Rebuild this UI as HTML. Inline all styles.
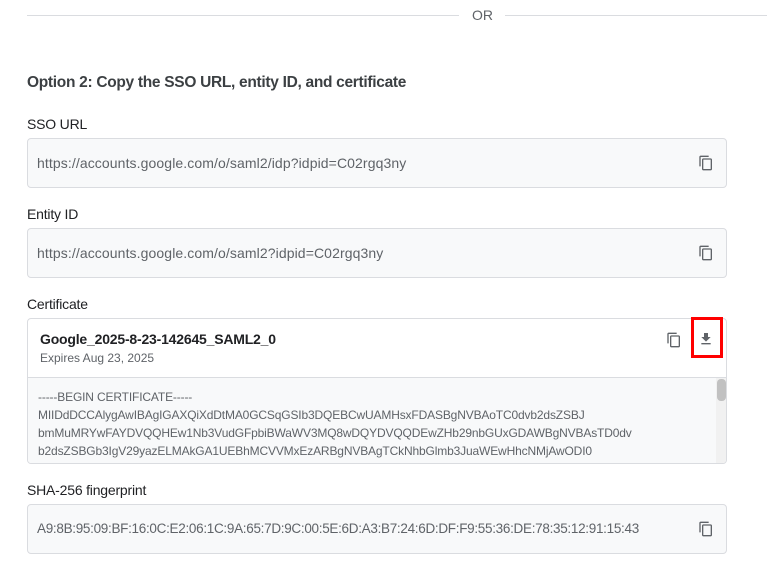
<!DOCTYPE html>
<html><head><meta charset="utf-8"><style>
*{box-sizing:border-box;margin:0;padding:0}
body{width:767px;height:576px;background:#fff;font-family:"Liberation Sans",Arial,sans-serif;position:relative;overflow:hidden;color:#202124}
.a{position:absolute}
.line{height:1px;background:#dadce0}
.lbl{font-size:14px;color:#202124;letter-spacing:-0.2px}
.box{position:absolute;left:27px;width:700px;border:1px solid #dadce0;border-radius:4px;background:#f8f9fa}
.val{position:absolute;left:9px;font-size:14px;color:#5f6368;letter-spacing:0.1px}
.cp{position:absolute;width:16px;height:18px}
</style></head><body>
<div class="a line" style="left:27px;top:15px;width:432px"></div>
<div class="a line" style="left:505px;top:15px;width:262px"></div>
<div class="a" style="left:472px;top:7px;font-size:14px;color:#5f6368">OR</div>
<div class="a" style="left:27px;top:74px;font-size:15.5px;font-weight:bold;color:#3c4043;letter-spacing:-0.3px">Option 2: Copy the SSO URL, entity ID, and certificate</div>

<div class="a lbl" style="left:27px;top:116px">SSO URL</div>
<div class="box" style="top:138px;height:50px"><div class="val" style="top:16px">https://accounts.google.com/o/saml2/idp?idpid=C02rgq3ny</div>
<svg class="cp" style="left:670px;top:15px" viewBox="0 0 24 24"><path fill="#5f6368" d="M16 1H4c-1.1 0-2 .9-2 2v14h2V3h12V1zm3 4H8c-1.1 0-2 .9-2 2v14c0 1.1.9 2 2 2h11c1.1 0 2-.9 2-2V7c0-1.1-.9-2-2-2zm0 16H8V7h11v14z"/></svg></div>

<div class="a lbl" style="left:27px;top:206px">Entity ID</div>
<div class="box" style="top:228px;height:50px"><div class="val" style="top:16px">https://accounts.google.com/o/saml2?idpid=C02rgq3ny</div>
<svg class="cp" style="left:670px;top:15px" viewBox="0 0 24 24"><path fill="#5f6368" d="M16 1H4c-1.1 0-2 .9-2 2v14h2V3h12V1zm3 4H8c-1.1 0-2 .9-2 2v14c0 1.1.9 2 2 2h11c1.1 0 2-.9 2-2V7c0-1.1-.9-2-2-2zm0 16H8V7h11v14z"/></svg></div>

<div class="a lbl" style="left:27px;top:296px">Certificate</div>
<div class="box" style="top:318px;height:146px;background:#fff;overflow:hidden">
<div class="a" style="left:12px;top:12px;font-size:14px;font-weight:bold;color:#202124;letter-spacing:-0.2px">Google_2025-8-23-142645_SAML2_0</div>
<div class="a" style="left:12px;top:32px;font-size:12px;color:#5f6368">Expires Aug 23, 2025</div>
<svg class="cp" style="left:638px;top:12px" viewBox="0 0 24 24"><path fill="#5f6368" d="M16 1H4c-1.1 0-2 .9-2 2v14h2V3h12V1zm3 4H8c-1.1 0-2 .9-2 2v14c0 1.1.9 2 2 2h11c1.1 0 2-.9 2-2V7c0-1.1-.9-2-2-2zm0 16H8V7h11v14z"/></svg>
<svg class="a" style="left:670px;top:12px;width:16px;height:16px" viewBox="0 0 24 24"><path fill="#5f6368" d="M19 9h-4V3H9v6H5l7 7 7-7zM5 18v2h14v-2H5z"/></svg>
<div class="a" style="left:0;top:58px;width:700px;height:88px;background:#f8f9fa;border-top:1px solid #dadce0"></div>
<div class="a" style="left:10px;top:69px;font-size:12px;line-height:18px;color:#5f6368;letter-spacing:-0.15px;white-space:nowrap">-----BEGIN CERTIFICATE-----<br>MIIDdDCCAlygAwIBAgIGAXQiXdDtMA0GCSqGSIb3DQEBCwUAMHsxFDASBgNVBAoTC0dvb2dsZSBJ<br>bmMuMRYwFAYDVQQHEw1Nb3VudGFpbiBWaWV3MQ8wDQYDVQQDEwZHb29nbGUxGDAWBgNVBAsTD0dv<br>b2dsZSBGb3IgV29yazELMAkGA1UEBhMCVVMxEzARBgNVBAgTCkNhbGlmb3JuaWEwHhcNMjAwODI0</div>
<div class="a" style="left:688px;top:59px;width:11px;height:87px;background:#f1f1f1"></div>
<div class="a" style="left:689px;top:60px;width:9px;height:22px;background:#c1c1c1;border-radius:4px"></div>
</div>
<div class="a" style="left:691px;top:317px;width:32px;height:41px;border:3px solid #f00"></div>

<div class="a lbl" style="left:27px;top:482px">SHA-256 fingerprint</div>
<div class="box" style="top:504px;height:50px"><div class="val" style="top:16px;font-size:13.5px;letter-spacing:-0.3px">A9:8B:95:09:BF:16:0C:E2:06:1C:9A:65:7D:9C:00:5E:6D:A3:B7:24:6D:DF:F9:55:36:DE:78:35:12:91:15:43</div>
<svg class="cp" style="left:670px;top:15px" viewBox="0 0 24 24"><path fill="#5f6368" d="M16 1H4c-1.1 0-2 .9-2 2v14h2V3h12V1zm3 4H8c-1.1 0-2 .9-2 2v14c0 1.1.9 2 2 2h11c1.1 0 2-.9 2-2V7c0-1.1-.9-2-2-2zm0 16H8V7h11v14z"/></svg></div>
</body></html>
